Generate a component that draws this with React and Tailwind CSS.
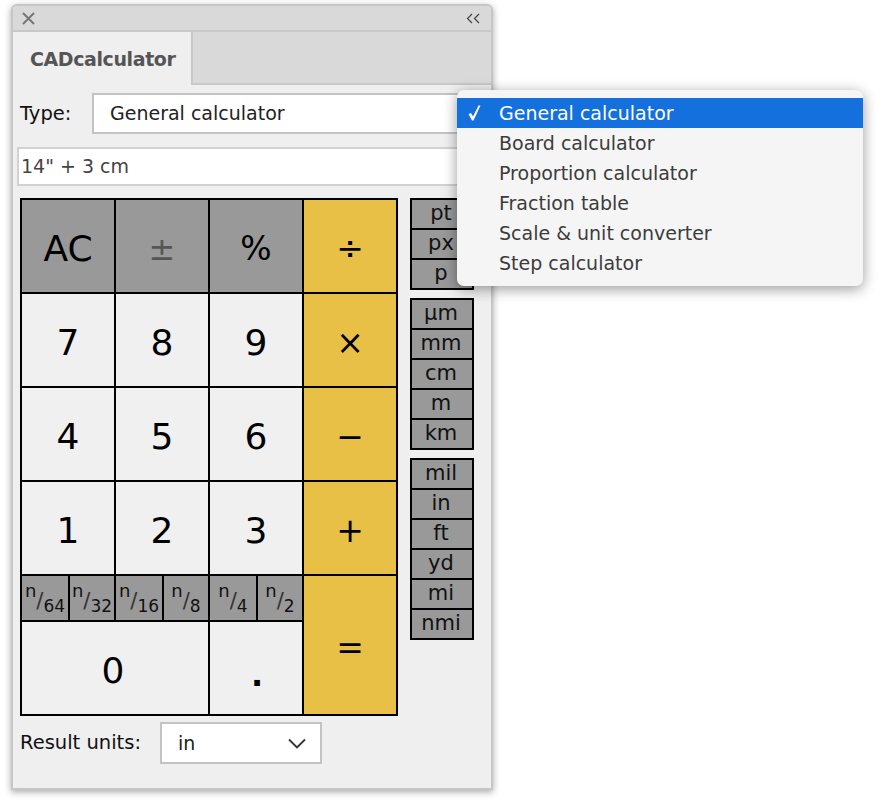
const keyBase = "flex items-center justify-center";
const light = "bg-[#f0f0f0]";
const gray = "bg-[#999999]";
const amber = "bg-[#e8c046]";

const menuItems = [
  "General calculator",
  "Board calculator",
  "Proportion calculator",
  "Fraction table",
  "Scale & unit converter",
  "Step calculator",
];

const unitGroups = [
  ["pt", "px", "p"],
  ["µm", "mm", "cm", "m", "km"],
  ["mil", "in", "ft", "yd", "mi", "nmi"],
];

const fractions = ["64", "32", "16", "8", "4", "2"];

const Key = ({ label, color, className = "pt-[6px] text-[36px] text-black" }) => (
  <div className={`${keyBase} ${color} ${className}`}>{label}</div>
);

const Op = ({ label, className = "" }) => (
  <Key label={label} color={amber} className={`pt-[6px] text-[33px] text-black ${className}`} />
);

const Fraction = ({ den }) => (
  <div className={`${gray} flex items-center justify-center text-[#111] leading-none`}>
    <span className="text-[18px] mb-[14px]">n</span>
    <span className="text-[21px] mt-[6px] text-[#333]">/</span>
    <span className="text-[17px] mt-[16px]">{den}</span>
  </div>
);

const Menu = () => (
  <div className="absolute left-[457px] top-[90px] w-[406px] h-[196px] rounded-[7px] bg-[#f5f5f5] shadow-[0_3px_14px_rgba(0,0,0,0.4)] pt-[8px] text-[19px] text-[#3c3c3c]">
    {menuItems.map((item, i) => (
      <div
        key={item}
        className={`h-[30px] flex items-center relative pl-[42px] ${i === 0 ? "bg-[#1470dc] text-white" : ""}`}
      >
        {i === 0 && (
          <svg width="15" height="16" viewBox="0 0 15 16" className="absolute left-[10px] top-[7px]">
            <path d="M1.5 9 L4 8 L6 11.5 L11.5 0.5 L13.5 0.5 L6.5 15.5 L5 15.5 Z" fill="white" />
          </svg>
        )}
        {item}
      </div>
    ))}
  </div>
);

export default function App() {
  return (
    <div className="relative w-[892px] h-[804px] bg-white font-['DejaVu_Sans',sans-serif] overflow-hidden">
      <div className="absolute left-[11px] top-[4px] w-[482px] h-[786px] rounded-t-[6px] border-2 border-[#c6c6c6] bg-[#efefef] shadow-[0_2px_7px_rgba(0,0,0,0.35)] flex flex-col">
        {/* title bar */}
        <div className="h-[26px] bg-[#d9d9d9] rounded-t-[4px] flex items-center justify-between pl-[9px] pr-[11px] border-b-2 border-[#c8c8c8] shrink-0">
          <svg width="13" height="13" viewBox="0 0 13 13">
            <path d="M1 1 L12 12 M12 1 L1 12" stroke="#777" strokeWidth="2" fill="none" />
          </svg>
          <svg width="14" height="11" viewBox="0 0 14 11">
            <path d="M6 1 L1.5 5.5 L6 10 M13 1 L8.5 5.5 L13 10" stroke="#444" strokeWidth="1.2" fill="none" />
          </svg>
        </div>

        {/* tab row */}
        <div className="h-[53px] bg-[#d9d9d9] flex border-b-2 border-[#c8c8c8] shrink-0">
          <div className="w-[180px] -mb-[2px] bg-[#efefef] border-r-2 border-[#c8c8c8] flex items-center pl-[17px] pt-[2px] text-[19px] font-bold tracking-[-0.4px] text-[#555]">
            CADcalculator
          </div>
        </div>

        <div className="flex items-center pl-[7px] pr-[9px] mt-[8px] shrink-0">
          <span className="w-[72px] text-[19.5px] text-[#111]">Type:</span>
          <div className="flex-1 h-[41px] bg-white border-2 border-[#c3c3c3] flex items-center pl-[16px] text-[19px] text-[#222]">
            General calculator
          </div>
        </div>

        <div className="mx-[4px] mr-[9px] mt-[13px] h-[39px] bg-white border-2 border-[#d2d2d2] flex items-center pl-[2px] text-[19px] text-[#444] shrink-0">
          14" + 3 cm
        </div>

        <div className="flex items-start pl-[7px] mt-[12px] gap-[12px]">
          {/* keypad */}
          <div className="grid grid-cols-[repeat(4,92px)] grid-rows-[92px_92px_92px_92px_44px_92px] gap-[2px] bg-black p-[2px] w-[378px]">
            <Key label="AC" color={gray} />
            <Key label="±" color={gray} className="pt-[6px] text-[32px] text-[#555]" />
            <Key label="%" color={gray} className="pt-[6px] text-[33px] text-black" />
            <Op label="÷" />
            <Key label="7" color={light} />
            <Key label="8" color={light} />
            <Key label="9" color={light} />
            <Op label="×" />
            <Key label="4" color={light} />
            <Key label="5" color={light} />
            <Key label="6" color={light} />
            <Op label="−" />
            <Key label="1" color={light} />
            <Key label="2" color={light} />
            <Key label="3" color={light} />
            <Op label="+" />
            <div className="col-span-3 grid grid-cols-[46px_44px_46px_44px_46px_44px] gap-[2px]">
              {fractions.map((den) => (
                <Fraction key={den} den={den} />
              ))}
            </div>
            <Op label="=" className="row-span-2" />
            <Key label="0" color={light} className="col-span-2 pt-[6px] pr-[4px] text-[36px] text-black" />
            <Key label="." color={light} className="pt-[14px] pl-[2px] text-[32px] font-bold text-black" />
          </div>

          {/* units */}
          <div className="flex flex-col gap-[8px]">
            {unitGroups.map((group, i) => (
              <div key={i} className="w-[64px] bg-black p-[2px] flex flex-col gap-[2px]">
                {group.map((unit) => (
                  <div key={unit} className={`${gray} h-[28px] flex items-center justify-center pr-[2px] pb-[2px] text-[21px] leading-none text-[#111]`}>
                    {unit}
                  </div>
                ))}
              </div>
            ))}
          </div>
        </div>

        <div className="flex items-center pl-[7px] mt-[6px]">
          <span className="w-[140px] text-[19.5px] text-[#111]">Result units:</span>
          <div className="w-[162px] h-[42px] bg-white border-2 border-[#c3c3c3] flex items-center justify-between pl-[16px] pr-[14px] text-[19px] text-[#222]">
            in
            <svg width="18" height="11" viewBox="0 0 18 11">
              <path d="M1 1.5 L9 9.5 L17 1.5" stroke="#333" strokeWidth="1.8" fill="none" />
            </svg>
          </div>
        </div>
      </div>

      <Menu />
    </div>
  );
}
